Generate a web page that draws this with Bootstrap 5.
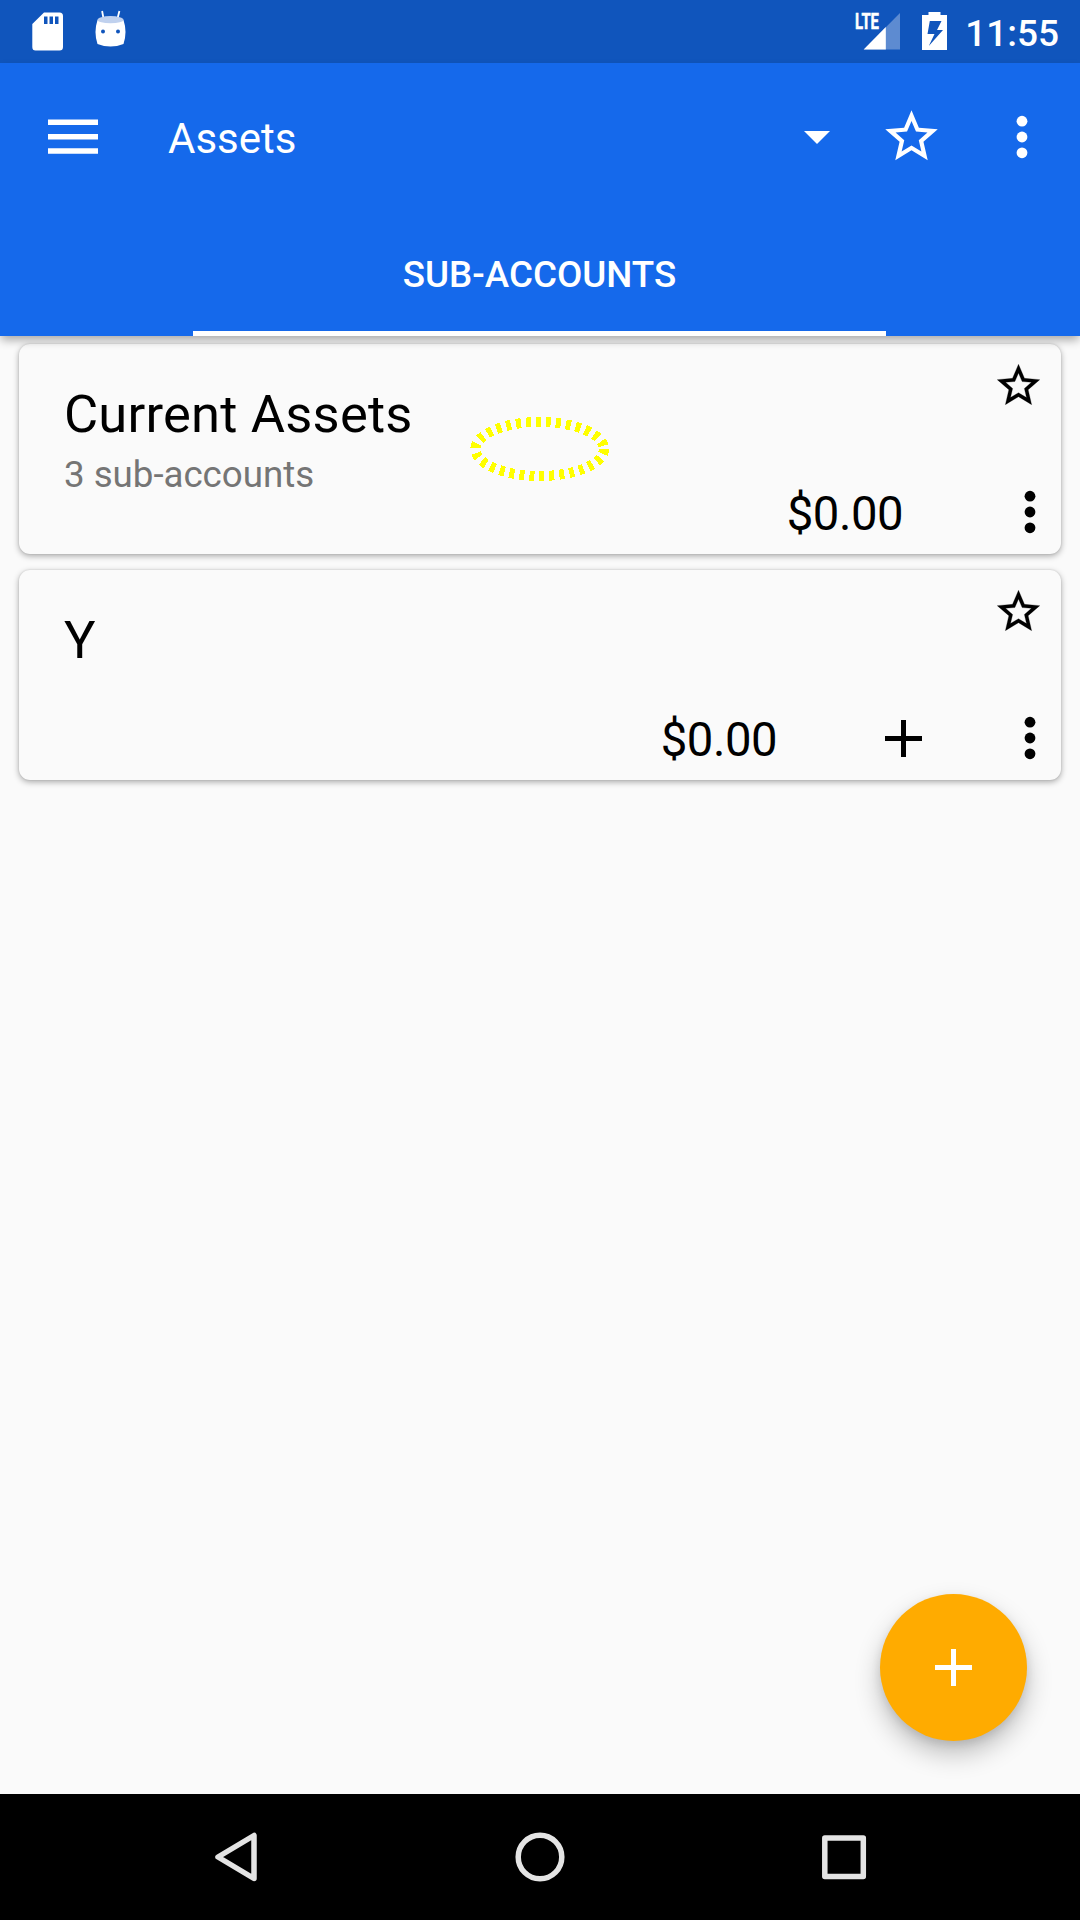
<!DOCTYPE html>
<html lang="en">
<head>
<meta charset="utf-8">
<meta name="viewport" content="width=device-width, initial-scale=1">
<title>Assets</title>
<link href="https://cdn.jsdelivr.net/npm/bootstrap@5.3.0/dist/css/bootstrap.min.css" rel="stylesheet">
<style>
body{font-family:Roboto,"Liberation Sans",sans-serif;background:#fafafa;color:#000;line-height:1.2}
svg{display:block;flex:none}
.screen{width:1080px;height:1920px}
.statusbar{height:63px;background:#1055bc;padding:0 21px 0 32px}
.clock{font-size:37px;font-weight:500;line-height:44px;padding-top:4px;margin-left:18px}
.droid{margin-left:25px}
.battery{margin-left:21px}
.appbar{background:#1569eb;z-index:2;box-shadow:0 5px 9px -1px rgba(0,0,0,.33)}
.toolrow{height:147px;padding:0 28px 0 40px}
.apptitle{font-size:42px;line-height:50px;padding-top:4px;margin-left:70px}
.caret{margin-top:2px}
.star-lg{margin:-1px 73.5px 0 49.5px}
.tabrow{height:126px;padding-right:1px}
.tab-item{width:693px;border-bottom:5px solid #fff;font-size:36.75px;font-weight:500;line-height:44px;padding-top:8px;color:#fff}
.accounts{padding:8px 19px 0;gap:16px}
.account{height:210px;border:0;border-radius:11px;background:#fafafa;box-shadow:0 2px 6px rgba(0,0,0,.33),0 0 2px rgba(0,0,0,.14);padding:0 17px 0 45px}
.acc-name{font-size:52.5px;line-height:62px;padding-top:39px;letter-spacing:.2px}
.acc-sub{font-size:36.75px;line-height:44px;color:#757575;margin-top:8px;letter-spacing:-.05px}
.acc-star{padding-top:16px}
.acc-foot{bottom:12px;right:25px}
.balance{font-size:47.25px;line-height:56px;padding-top:4px;letter-spacing:-.5px}
.balance-dots{margin-left:121px}
.add-entry{margin:0 102px 0 108px}
.halo{left:465px;top:410px;z-index:3}
.fab{width:147px;height:147px;right:53px;bottom:179px;background:#ffab00;box-shadow:0 13px 26px rgba(0,0,0,.24),0 4px 10px rgba(0,0,0,.1)}
.navbar-sys{height:126px;background:#000}
</style>
</head>
<body>
<svg width="0" height="0" class="position-absolute"><defs>
<symbol id="star" viewBox="0 0 24 24"><path d="M22 9.24l-7.19-.62L12 2 9.19 8.63 2 9.24l5.46 4.73L5.82 21 12 17.27 18.18 21l-1.63-7.03L22 9.24zM12 15.4l-3.76 2.27 1-4.28-3.32-2.88 4.38-.38L12 6.1l1.71 4.04 4.38.38-3.32 2.88 1 4.28L12 15.4z"/></symbol>
<symbol id="dots" viewBox="0 0 12 44"><circle cx="6" cy="6.2" r="5.4"/><circle cx="6" cy="22" r="5.4"/><circle cx="6" cy="37.8" r="5.4"/></symbol>
<symbol id="plus" viewBox="0 0 37 37"><path d="M16 0h5v16h16v5H21v16h-5V21H0v-5h16z"/></symbol>
</defs></svg>
<div class="screen d-flex flex-column position-relative overflow-hidden">
  <div class="statusbar d-flex align-items-center text-white flex-shrink-0">
    <svg width="32" height="63" viewBox="0 0 32 63"><path fill="#fff" fill-rule="evenodd" d="M12 12.5h15.500q3.500 0 3.500 3.500v31q0 3.500-3.500 3.500h-24Q.3 50.500.3 47V24zM12 16.500V24h3.500v-7.500zM17.500 16.500V24h3.500v-7.500zM23 16.500V24h3.500v-7.500z"/></svg>
    <svg class="droid" width="44" height="63" viewBox="-2.5 0 44 63">
      <path stroke="#fff" stroke-width="1.800" d="M10.600 11l1.500 8M27.900 11l-2 8"/>
      <path fill="#fff" d="M6 20q13 5 26 0 4 12 0 24-13 5-26 0-4-12 0-24z"/>
      <ellipse cx="19" cy="19.700" rx="13" ry="3.600" fill="#c0d1ee"/>
      <circle cx="11.500" cy="31.500" r="2" fill="#1055bc"/><circle cx="26.500" cy="31.500" r="2" fill="#1055bc"/>
    </svg>
    <div class="ms-auto d-flex align-items-center">
      <svg width="46" height="63" viewBox="0 0 46 63"><path fill="#5d8bd1" d="M45 13v36.500H8.700z"/><path fill="#fff" d="M30.800 27v22.500H8.700z"/><path fill="#1055bc" d="M0 12h26v18H0z"/><text x="0" y="29" font-size="21.500" font-weight="700" fill="#fff" stroke="#fff" stroke-width=".5" textLength="24" lengthAdjust="spacingAndGlyphs">LTE</text></svg>
      <svg class="battery" width="25" height="63" viewBox="0 0 25 63"><path fill="#fff" fill-rule="evenodd" d="M6.500 12h12v3H25v35H0V15h6.500zM7.800 21L5.500 34h7L6.800 46 21 30h-6l4.500-9z"/></svg>
      <div class="clock">11:55</div>
    </div>
  </div>
  <header class="appbar position-relative text-white flex-shrink-0">
    <div class="toolrow d-flex align-items-center">
      <svg class="ms-2" width="50" height="36" viewBox="0 0 50 36" fill="#fff"><path d="M0 .500h50V6H0zM0 15h50v5.500H0zM0 29.300h50v5.500H0z"/></svg>
      <div class="apptitle">Assets</div>
      <svg class="caret ms-auto" width="26" height="13" viewBox="0 0 26 13" fill="#fff"><path d="M0 0h26L13 13z"/></svg>
      <svg class="star-lg" width="63" height="63" fill="#fff"><use href="#star"/></svg>
      <svg width="12" height="44" fill="#fff" class="me-4"><use href="#dots"/></svg>
    </div>
    <nav class="tabrow d-flex justify-content-center"><a class="tab-item d-flex align-items-center justify-content-center text-decoration-none" href="#">SUB-ACCOUNTS</a></nav>
  </header>
  <main class="accounts d-flex flex-column flex-grow-1">
    <section class="card account flex-row justify-content-between">
      <div><div class="acc-name">Current Assets</div><div class="acc-sub">3 sub-accounts</div></div>
      <div class="acc-star"><svg width="51" height="51" stroke="#000" stroke-width=".12"><use href="#star"/></svg></div>
      <div class="acc-foot position-absolute d-flex align-items-center">
        <div class="balance">$0.00</div><svg class="balance-dots" width="12" height="44"><use href="#dots"/></svg>
      </div>
    </section>
    <section class="card account flex-row justify-content-between">
      <div class="acc-name">Y</div>
      <div class="acc-star"><svg width="51" height="51" stroke="#000" stroke-width=".12"><use href="#star"/></svg></div>
      <div class="acc-foot position-absolute d-flex align-items-center">
        <div class="balance">$0.00</div><svg class="add-entry" width="37" height="37"><use href="#plus"/></svg><svg width="12" height="44"><use href="#dots"/></svg>
      </div>
    </section>
  </main>
  <svg class="halo position-absolute" width="150" height="80" viewBox="465 410 150 80" shape-rendering="crispEdges"><ellipse cx="539.700" cy="449" rx="64.300" ry="27" fill="none" stroke="#ff0" stroke-width="10" stroke-dasharray="5 5"/></svg>
  <button class="fab btn rounded-circle border-0 p-0 position-absolute d-flex align-items-center justify-content-center" aria-label="Add account"><svg width="37" height="37" fill="#fff"><use href="#plus"/></svg></button>
  <footer class="navbar-sys d-flex align-items-center flex-shrink-0 position-relative">
    <svg width="1080" height="126" viewBox="0 1794 1080 126" fill="none" stroke="#e4e4e4" stroke-width="5.500" stroke-linejoin="round"><path d="M254 1835.500v43L218 1857z"/><circle cx="540" cy="1857" r="21.800"/><rect x="824.800" y="1838" width="38.500" height="38.500"/></svg>
  </footer>
</div>
<script src="https://cdn.jsdelivr.net/npm/bootstrap@5.3.0/dist/js/bootstrap.bundle.min.js"></script>
</body>
</html>
